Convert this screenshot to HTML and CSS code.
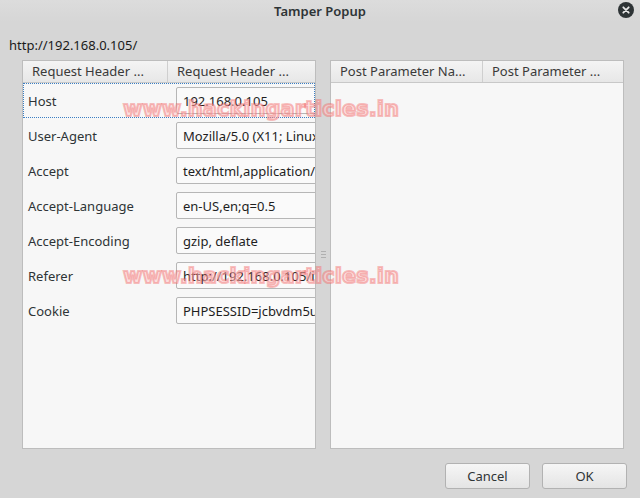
FILE: index.html
```html
<!DOCTYPE html>
<html>
<head>
<meta charset="utf-8">
<title>Tamper Popup</title>
<link rel="stylesheet" href="styles.css">
</head>
<body>
<div class="window">
  <div class="titlebar">
    <span class="title">Tamper Popup</span>
    <span class="close">
      <svg width="16" height="16" viewBox="0 0 16 16"><circle cx="8" cy="8" r="8" fill="#2e3436"/><path d="M5.3 5.3 L10.7 10.7 M10.7 5.3 L5.3 10.7" stroke="#e8e8e8" stroke-width="1.8" stroke-linecap="round"/></svg>
    </span>
  </div>

  <div class="url">http://192.168.0.105/</div>

  <div class="panes">
    <div class="pane left">
      <div class="head">
        <div class="col c1">Request Header ...</div>
        <div class="col c2">Request Header ...</div>
      </div>
      <div class="rows">
        <div class="row focus"><span class="name">Host</span><span class="value">192.168.0.105</span></div>
        <div class="row"><span class="name">User-Agent</span><span class="value">Mozilla/5.0 (X11; Linux x86_64; rv:52.0)</span></div>
        <div class="row"><span class="name">Accept</span><span class="value">text/html,application/xhtml+xml</span></div>
        <div class="row"><span class="name">Accept-Language</span><span class="value">en-US,en;q=0.5</span></div>
        <div class="row"><span class="name">Accept-Encoding</span><span class="value">gzip, deflate</span></div>
        <div class="row"><span class="name">Referer</span><span class="value">http://192.168.0.105/index.php</span></div>
        <div class="row"><span class="name">Cookie</span><span class="value">PHPSESSID=jcbvdm5u0q7</span></div>
      </div>
    </div>

    <div class="splitter"><span></span><span></span><span></span></div>

    <div class="pane right">
      <div class="head">
        <div class="col p1">Post Parameter Na...</div>
        <div class="col p2">Post Parameter ...</div>
      </div>
    </div>
  </div>

  <div class="buttons">
    <button class="btn">Cancel</button>
    <button class="btn">OK</button>
  </div>

  <div class="mark m1">www.hackingarticles.in</div>
  <div class="mark m2">www.hackingarticles.in</div>
</div>
</body>
</html>
```

FILE: styles.css
```css
html, body {
	margin: 0;
	padding: 0;
}

body {
	background-color: #d6d6d6;
	font-family: "Noto Sans", "DejaVu Sans", sans-serif;
	font-size: 13px;
	color: #2e3436;
}

.window {
	position: relative;
	width: 640px;
	height: 498px;
	display: flex;
	flex-direction: column;
	overflow: hidden;
}

.titlebar {
	position: relative;
	height: 22px;
	display: flex;
	align-items: center;
	justify-content: center;
	background: linear-gradient(#dcdcdc, #d6d6d6);
}

.title {
	font-weight: 600;
	font-size: 13px;
	color: #2e3436;
}

.close {
	position: absolute;
	right: 6px;
	top: 2px;
	width: 16px;
	height: 16px;
}

.url {
	height: 38px;
	line-height: 47px;
	padding-left: 9px;
	box-sizing: border-box;
	color: #1a1a1a;
}

.panes {
	display: flex;
	height: 389px;
	padding-left: 22px;
}

.pane {
	width: 294px;
	box-sizing: border-box;
	background: #f7f7f7;
	border: 1px solid #bdbdbd;
	overflow: hidden;
}

.head {
	display: flex;
	height: 22px;
	background: linear-gradient(#f4f4f4, #e7e7e7);
	border-bottom: 1px solid #c8c8c8;
	box-sizing: border-box;
}

.col {
	line-height: 21px;
	padding-left: 9px;
	color: #3a3a3a;
	box-sizing: border-box;
	white-space: nowrap;
}

.c1 { width: 145px; border-right: 1px solid #cfcfcf; }
.c2 { flex: 1; }
.p1 { width: 152px; border-right: 1px solid #cfcfcf; }
.p2 { flex: 1; }

.row {
	display: flex;
	align-items: center;
	height: 35px;
	white-space: nowrap;
}

.row.focus {
	outline: 1px dotted #3b7fc4;
	outline-offset: -1px;
}

.name {
	width: 153px;
	padding-left: 5px;
	box-sizing: border-box;
	flex-shrink: 0;
}

.value {
	display: block;
	height: 27px;
	line-height: 26px;
	box-sizing: border-box;
	padding-left: 6px;
	width: 200px;
	flex-shrink: 0;
	background: #fafafa;
	border: 1px solid #b6b6b6;
	border-radius: 2px;
	color: #1e1e1e;
}

.splitter {
	width: 14px;
	display: flex;
	flex-direction: column;
	align-items: center;
	justify-content: center;
	gap: 2px;
}

.splitter span {
	width: 5px;
	height: 1px;
	background: #b0b0b0;
}

.buttons {
	display: flex;
	justify-content: flex-end;
	gap: 12px;
	padding: 14px 13px 0 0;
}

.btn {
	width: 85px;
	height: 26px;
	font-family: "Noto Sans", "DejaVu Sans", sans-serif;
	font-size: 13px;
	color: #2e3436;
	background: linear-gradient(#f6f6f6, #e4e4e4);
	border: 1px solid #b2b2b2;
	border-radius: 3px;
	padding: 0;
}

.mark {
	position: absolute;
	left: 123px;
	font-family: "DejaVu Sans", "Liberation Sans", sans-serif;
	font-weight: bold;
	font-size: 21px;
	color: rgba(255, 200, 200, 0.55);
	-webkit-text-stroke: 2px rgba(240, 90, 90, 0.4);
	pointer-events: none;
	white-space: nowrap;
}

.m1 { top: 97px; }
.m2 { top: 264px; }
```
